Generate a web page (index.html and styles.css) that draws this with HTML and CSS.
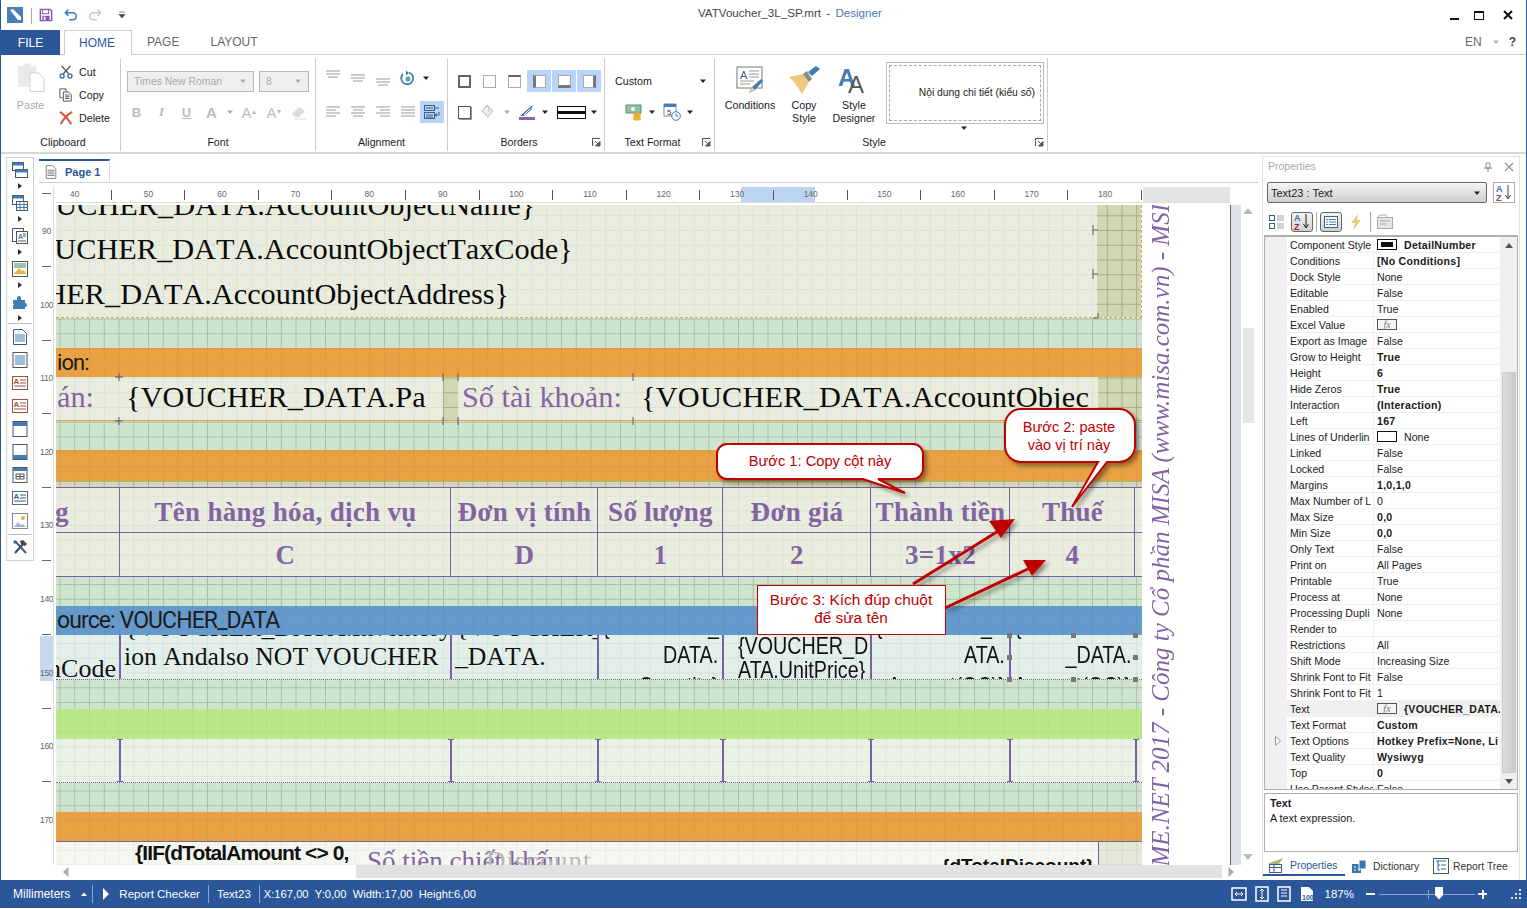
FILE: index.html
```
<!DOCTYPE html>
<html lang="vi">
<head>
<meta charset="utf-8">
<title>VATVoucher_3L_SP.mrt - Designer</title>
<link rel="stylesheet" href="styles.css">
</head>
<body>
<svg class="sprite" width="0" height="0">
  <symbol id="i-cut" viewBox="0 0 16 16"><path d="M3 1l8 9M13 1L5 10" stroke="#555" stroke-width="1.6" fill="none"/><circle cx="3.5" cy="12.5" r="2.3" fill="none" stroke="#3c78b4" stroke-width="1.6"/><circle cx="12.5" cy="12.5" r="2.3" fill="none" stroke="#3c78b4" stroke-width="1.6"/></symbol>
  <symbol id="i-copy" viewBox="0 0 16 16"><path d="M1 1h7v3M1 1v10h3" fill="none" stroke="#444"/><path d="M5 4.500h6l3 3v7.500h-9z" fill="#fff" stroke="#444"/><path d="M7 8h5M7 10h5M7 12h5" stroke="#444"/></symbol>
  <symbol id="i-del" viewBox="0 0 16 16"><path d="M1 1c5 3 9 8 13 14M15 1c-5 3-10 8-13 14" stroke="#d9593c" stroke-width="2.400" fill="none"/></symbol>
  <symbol id="i-az" viewBox="0 0 16 18"><text x="0" y="8" font-size="9" font-weight="700" font-family="Liberation Sans" fill="#3c6eb4">A</text><text x="0" y="17" font-size="9" font-weight="700" font-family="Liberation Sans" fill="#8a3d8a">Z</text><path d="M12 1v13M9.500 11l2.500 4 2.500-4" stroke="#444" fill="none"/></symbol>
  <symbol id="i-text" viewBox="0 0 16 16"><rect x=".5" y="1.500" width="15" height="13" fill="#fff" stroke="#666"/><path d="M8 5h6M8 8h6M2 11h12" stroke="#3a5f8c"/><text x="1.500" y="9" font-size="8" font-weight="700" font-family="Liberation Sans" fill="#3a5f8c">A</text></symbol>
  <symbol id="i-text2" viewBox="0 0 16 16"><rect x=".5" y="1.500" width="15" height="13" fill="#fff" stroke="#a0523d"/><path d="M8 5h6M8 8h6M2 11h12" stroke="#a0523d"/><text x="1.500" y="9" font-size="8" font-weight="700" font-family="Liberation Sans" fill="#a0523d">A</text></symbol>
  <symbol id="i-caretd" viewBox="0 0 8 8"><path d="M1 2.500h6L4 6z" fill="currentColor"/></symbol>
</svg>
<div class="app">
  <header class="titlebar">
    <div class="qat">
      <svg class="logo" viewBox="0 0 16 16"><rect width="16" height="16" fill="#4a7eb8"/><path d="M3 3l3-1 8 8v3h-3z" fill="#fff"/></svg>
      <span class="qat-sep"></span>
      <svg class="qat-i" viewBox="0 0 16 16"><path d="M1.500 1.500h11l2 2v11h-13z" fill="#f6f0fa" stroke="#8b51a8" stroke-width="1.500"/><rect x="4" y="2" width="7" height="4.500" fill="#fff" stroke="#8b51a8"/><rect x="4" y="9" width="8" height="5" fill="#8b51a8"/><rect x="5.500" y="10" width="2" height="4" fill="#fff"/></svg>
      <svg class="qat-i undo" viewBox="0 0 16 16"><path d="M2 5.500h8a4 4 0 010 8H6M5 2L1.500 5.500 5 9" fill="none" stroke="#3f7cb8" stroke-width="1.800"/></svg>
      <svg class="qat-i redo" viewBox="0 0 16 16"><path d="M14 5.500H6a4 4 0 000 8h4M11 2l3.500 3.500L11 9" fill="none" stroke="#c9c9c9" stroke-width="1.800"/></svg>
      <svg class="qat-c" viewBox="0 0 8 8"><path d="M1 1h6M1 3.500h6L4 7z" fill="#444" stroke="#444" stroke-width=".6"/></svg>
    </div>
    <div class="doc-title">VATVoucher_3L_SP.mrt<span class="dash"> - </span><span class="app-name">Designer</span></div>
    <div class="winbtns">
      <span class="win min"></span>
      <span class="win max"></span>
      <svg class="win-x" viewBox="0 0 10 10"><path d="M1 1l8 8M9 1l-8 8" stroke="#111" stroke-width="2"/></svg>
    </div>
  </header>
  <nav class="tabs">
    <span class="tab-file">FILE</span>
    <span class="tab-home">HOME</span>
    <span class="tab-page">PAGE</span>
    <span class="tab-layout">LAYOUT</span>
    <span class="tab-right"><span>EN</span><svg class="car" viewBox="0 0 8 8"><use href="#i-caretd"/></svg><b>?</b></span>
  </nav>
  <section class="ribbon">
    <div class="group g-clip">
      <div class="gbody clip-body">
        <div class="big paste">
          <svg class="paste-i" viewBox="0 0 30 32"><path d="M1 4h6V1h8v3h6v22H1z" fill="#e9e9e9"/><path d="M14 11h9l6 6v14H14z" fill="#fff" stroke="#cfcfcf"/></svg>
          <span>Paste</span>
        </div>
        <div class="clip-list">
          <div class="sm"><svg class="i14" viewBox="0 0 16 16"><use href="#i-cut"/></svg><span>Cut</span></div>
          <div class="sm"><svg class="i14" viewBox="0 0 16 16"><use href="#i-copy"/></svg><span>Copy</span></div>
          <div class="sm"><svg class="i14" viewBox="0 0 16 16"><use href="#i-del"/></svg><span>Delete</span></div>
        </div>
      </div>
      <div class="glabel">Clipboard</div>
    </div>
    <div class="group g-font">
      <div class="gbody rows">
        <div class="rrow">
          <div class="combo c-name"><span>Times New Roman</span><svg class="car" viewBox="0 0 8 8"><use href="#i-caretd"/></svg></div>
          <div class="combo c-size"><span>8</span><svg class="car" viewBox="0 0 8 8"><use href="#i-caretd"/></svg></div>
        </div>
        <div class="rrow dis">
          <span class="cell fb">B</span><span class="cell fi">I</span><span class="cell fu">U</span><span class="cell fb fa">A</span><span class="cell-c"><svg class="car" viewBox="0 0 8 8"><use href="#i-caretd"/></svg></span><span class="cell fg">A<sup>▴</sup></span><span class="cell fg">A<sup>▾</sup></span>
          <span class="cell"><svg class="i16" viewBox="0 0 16 16"><path d="M1 10l7-7 6 4-6 6H4z" fill="#dcdcdc"/><path d="M4 15h11" stroke="#dcdcdc"/></svg></span>
        </div>
      </div>
      <div class="glabel">Font</div>
    </div>
    <div class="group g-align">
      <div class="gbody rows">
        <div class="rrow r-up">
          <span class="cell"><svg class="i16" viewBox="0 0 16 16"><path d="M1 1h14M1 4h14M3 7h10" stroke="#999"/></svg></span>
          <span class="cell"><svg class="i16" viewBox="0 0 16 16"><path d="M1 5h14M1 8h14M3 11h10" stroke="#999"/></svg></span>
          <span class="cell"><svg class="i16" viewBox="0 0 16 16"><path d="M1 9h14M1 12h14M3 15h10" stroke="#999"/></svg></span>
          <span class="cell"><svg class="i16" viewBox="0 0 16 16"><path d="M3 4a6 6 0 106-1.500" fill="none" stroke="#3f7cb8" stroke-width="1.800"/><path d="M6 .5v5l3-2.500z" fill="#3f7cb8"/><circle cx="8" cy="9" r="2.500" fill="#6f9f8f"/></svg></span>
          <span class="cell-c"><svg class="car blk" viewBox="0 0 8 8"><use href="#i-caretd"/></svg></span>
        </div>
        <div class="rrow">
          <span class="cell"><svg class="i16" viewBox="0 0 16 16"><path d="M1 3h14M1 6h10M1 9h14M1 12h10" stroke="#999"/></svg></span>
          <span class="cell"><svg class="i16" viewBox="0 0 16 16"><path d="M1 3h14M3 6h10M1 9h14M3 12h10" stroke="#999"/></svg></span>
          <span class="cell"><svg class="i16" viewBox="0 0 16 16"><path d="M1 3h14M5 6h10M1 9h14M5 12h10" stroke="#999"/></svg></span>
          <span class="cell"><svg class="i16" viewBox="0 0 16 16"><path d="M1 3h14M1 6h14M1 9h14M1 12h14" stroke="#999"/></svg></span>
          <span class="cell on"><svg class="i16" viewBox="0 0 16 16"><rect x=".5" y="1.500" width="10" height="5" fill="none" stroke="#3a5f8c"/><rect x=".5" y="8.500" width="10" height="6" fill="none" stroke="#3a5f8c"/><path d="M2 4h7M2 11h7M2 13h7M11 4h4M15 8v3h-4M13 9.500L11 11l2 1.500" fill="none" stroke="#3a5f8c"/></svg></span>
        </div>
      </div>
      <div class="glabel">Alignment</div>
    </div>
    <div class="group g-bord">
      <div class="gbody rows">
        <div class="rrow">
          <span class="cell"><span class="bx bx-all"></span></span>
          <span class="cell"><span class="bx"></span></span>
          <span class="cell"><span class="bx bx-t"></span></span>
          <span class="cell on"><span class="bx bx-l"></span></span>
          <span class="cell on"><span class="bx bx-b"></span></span>
          <span class="cell on"><span class="bx bx-r"></span></span>
        </div>
        <div class="rrow">
          <span class="cell"><span class="bx bx-sh"></span></span>
          <span class="cell-w"><svg class="i16" viewBox="0 0 16 16"><path d="M7 1l6 6-5 6-6-6z" fill="#eee" stroke="#bbb"/><path d="M5 4a2 2 0 014 0v4" fill="none" stroke="#bbb"/></svg></span>
          <span class="cell-c"><svg class="car" viewBox="0 0 8 8"><use href="#i-caretd"/></svg></span>
          <span class="cell-p"><svg class="i16" viewBox="0 0 16 16"><path d="M1 12l9-8 4-3-2 5-7 6z" fill="#3f7cb8"/><path d="M5 11l6-6" stroke="#fff"/><rect x="0" y="13" width="16" height="3" fill="#8a64a8"/></svg></span>
          <span class="cell-c"><svg class="car blk" viewBox="0 0 8 8"><use href="#i-caretd"/></svg></span>
          <span class="linestyle"></span>
          <span class="cell-c"><svg class="car blk" viewBox="0 0 8 8"><use href="#i-caretd"/></svg></span>
        </div>
      </div>
      <div class="glabel">Borders<svg class="launch" viewBox="0 0 9 9"><path d="M.5 8V.5H8" fill="none" stroke="#555"/><path d="M3 3l4 4M8 3.500V8H3.500z" stroke="#555" fill="#555"/></svg></div>
    </div>
    <div class="group g-tf">
      <div class="gbody rows">
        <div class="rrow tf-top"><span>Custom</span><svg class="car blk" viewBox="0 0 8 8"><use href="#i-caretd"/></svg></div>
        <div class="rrow tf-bot">
          <span class="cell-w"><svg class="i18" viewBox="0 0 18 18"><rect x="1" y="2" width="15" height="8" fill="#8fbf9f" stroke="#5e9474"/><circle cx="8" cy="6" r="2" fill="#fff"/><ellipse cx="12" cy="11" rx="4" ry="1.700" fill="#e8b23c"/><ellipse cx="12" cy="13.500" rx="4" ry="1.700" fill="#e8b23c"/><ellipse cx="12" cy="16" rx="4" ry="1.700" fill="#e8b23c"/></svg></span>
          <span class="cell-c"><svg class="car blk" viewBox="0 0 8 8"><use href="#i-caretd"/></svg></span>
          <span class="cell-w cw2"><svg class="i18" viewBox="0 0 18 18"><rect x="1" y="1" width="12" height="12" fill="#fff" stroke="#888"/><rect x="1" y="1" width="12" height="3" fill="#3f7cb8"/><text x="4" y="12" font-size="8" font-family="Liberation Sans" fill="#444">5</text><circle cx="13" cy="13" r="4.300" fill="#fff" stroke="#3f7cb8"/><path d="M13 10.500V13h2" stroke="#3f7cb8" fill="none"/></svg></span>
          <span class="cell-c"><svg class="car blk" viewBox="0 0 8 8"><use href="#i-caretd"/></svg></span>
        </div>
      </div>
      <div class="glabel">Text Format<svg class="launch" viewBox="0 0 9 9"><path d="M.5 8V.5H8" fill="none" stroke="#555"/><path d="M3 3l4 4M8 3.500V8H3.500z" stroke="#555" fill="#555"/></svg></div>
    </div>
    <div class="group g-style">
      <div class="gbody style-body">
        <div class="big sb-cond">
          <svg class="i28" viewBox="0 0 28 28"><rect x="1" y="1" width="25" height="21" fill="#fff" stroke="#777"/><text x="4" y="13" font-size="11" font-family="Liberation Sans" fill="#3a5f8c">A</text><path d="M13 5h10M13 8h10M13 11h10M4 15h14M4 18h10" stroke="#999"/><path d="M13 27l3-6 9-8 2 2-8 9z" fill="#3f7cb8"/><path d="M13 27l3-6 3 3z" fill="#efc980"/></svg>
          <span>Conditions</span>
        </div>
        <div class="big sb-copy">
          <svg class="i32" viewBox="0 0 32 28"><path d="M1 11l14-3 6 8-7 12C10 22 6 15 1 11z" fill="#efc980"/><path d="M15 8l6 8 3-3-5-8z" fill="#8a8a8a"/><path d="M20 6l8-6 4 3-8 7z" fill="#3f7cb8"/></svg>
          <span>Copy<br>Style</span>
        </div>
        <div class="big sb-des">
          <svg class="i32" viewBox="0 0 32 28"><text x="0" y="20" font-size="24" font-family="Liberation Sans" font-weight="700" fill="#3f7cb8">A</text><text x="10" y="27" font-size="24" font-family="Liberation Sans" fill="#555">A</text></svg>
          <span>Style<br>Designer</span>
        </div>
        <div class="gallery">
          <div class="gal-in">Nội dung chi tiết (kiểu số)</div>
          <svg class="car blk gal-car" viewBox="0 0 8 8"><use href="#i-caretd"/></svg>
        </div>
      </div>
      <div class="glabel">Style<svg class="launch" viewBox="0 0 9 9"><path d="M.5 8V.5H8" fill="none" stroke="#555"/><path d="M3 3l4 4M8 3.500V8H3.500z" stroke="#555" fill="#555"/></svg></div>
    </div>
  </section>

  <main class="main">
    <aside class="toolbox">
      <span class="tb"><svg class="i16" viewBox="0 0 16 16"><rect x=".5" y=".5" width="11" height="8" fill="#fff" stroke="#555"/><rect x=".5" y=".5" width="11" height="3" fill="#3f7cb8"/><rect x="3.500" y="7.500" width="12" height="8" fill="#fff" stroke="#555"/><rect x="3.500" y="7.500" width="12" height="3" fill="#3f7cb8"/></svg></span>
      <span class="tb-c"></span>
      <span class="tb"><svg class="i16" viewBox="0 0 16 16"><rect x=".5" y=".5" width="11" height="9" fill="#fff" stroke="#555"/><rect x=".5" y=".5" width="11" height="3" fill="#3f7cb8"/><rect x="4.500" y="6.500" width="11" height="9" fill="#fff" stroke="#555"/><path d="M4.500 9.500h11M4.500 12.500h11M8 6.500v9M12 6.500v9" stroke="#3f7cb8"/></svg></span>
      <span class="tb-c"></span>
      <span class="tb"><svg class="i16" viewBox="0 0 16 16"><rect x=".5" y=".5" width="11" height="13" fill="#fff" stroke="#555"/><rect x="4.500" y="3.500" width="11" height="12" fill="#fff" stroke="#555"/><text x="6" y="11" font-size="7" font-weight="700" font-family="Liberation Sans" fill="#3f7cb8">A</text><path d="M11 6h3M11 8h3M6 13h8" stroke="#555"/></svg></span>
      <span class="tb-c"></span>
      <span class="tb"><svg class="i16" viewBox="0 0 16 16"><rect x=".5" y=".5" width="15" height="15" fill="#fff" stroke="#555"/><path d="M2 13l5-6 3 3 2-1 2 4z" fill="#e8b23c"/><rect x="2" y="2" width="12" height="5" fill="#9fc3a8"/></svg></span>
      <span class="tb-c"></span>
      <span class="tb"><svg class="i16" viewBox="0 0 16 16"><path d="M1 6h4V4a2 2 0 014 0v2h4v3a2 2 0 010 4v2H1v-3a2 2 0 000-3z" fill="#3f7cb8"/></svg></span>
      <span class="tb-c"></span>
      <span class="tb-sep"></span>
      <span class="tb t2"><svg class="i16" viewBox="0 0 16 16"><path d="M1.500 .5h9l4 4v11h-13z" fill="#fff" stroke="#555"/><path d="M3 6h10M3 8h10M3 10h10M3 12h10" stroke="#3f7cb8"/></svg></span>
      <span class="tb t2"><svg class="i16" viewBox="0 0 16 16"><rect x="1" y=".5" width="14" height="15" fill="#fff" stroke="#555"/><path d="M3 4h10M3 6h10M3 8h10M3 10h10M3 12h10" stroke="#3f7cb8"/></svg></span>
      <span class="tb t2"><svg class="i16" viewBox="0 0 16 16"><use href="#i-text2"/></svg></span>
      <span class="tb t2"><svg class="i16" viewBox="0 0 16 16"><use href="#i-text2"/></svg></span>
      <span class="tb t2"><svg class="i16" viewBox="0 0 16 16"><rect x="1" y=".5" width="14" height="15" fill="#fff" stroke="#555"/><rect x="1" y="1" width="14" height="4" fill="#3f7cb8"/></svg></span>
      <span class="tb t2"><svg class="i16" viewBox="0 0 16 16"><rect x="1" y=".5" width="14" height="15" fill="#fff" stroke="#555"/><rect x="1" y="11" width="14" height="4" fill="#3f7cb8"/></svg></span>
      <span class="tb t2"><svg class="i16" viewBox="0 0 16 16"><rect x="1" y=".5" width="14" height="15" fill="#fff" stroke="#555"/><rect x="1" y="1" width="14" height="3" fill="#3f7cb8"/><path d="M4 7h8v5H4zM4 9.500h8M8 7v5" fill="none" stroke="#555"/></svg></span>
      <span class="tb t2"><svg class="i16" viewBox="0 0 16 16"><use href="#i-text"/></svg></span>
      <span class="tb t2"><svg class="i16" viewBox="0 0 16 16"><rect x=".5" y=".5" width="15" height="15" fill="#fff" stroke="#888"/><path d="M2 14l4-5 3 3 2-1 3 3z" fill="#9fb6cf"/><circle cx="11" cy="5" r="2" fill="#e8b23c"/></svg></span>
      <span class="tb-sep"></span>
      <span class="tb t3"><svg class="i16" viewBox="0 0 16 16"><path d="M3 2l11 12" stroke="#3a5f8c" stroke-width="2" fill="none"/><path d="M1 3l2-2 2 2-2 2z" fill="#3a5f8c"/><path d="M3 14l9-10" stroke="#444" stroke-width="2" fill="none"/><path d="M8 2l3-1 4 4-2 2-2-1-2-1z" fill="#444"/></svg></span>
    </aside>

    <section class="designer">
      <div class="doc-tabs">
        <div class="doc-tab"><svg class="i14" viewBox="0 0 14 16"><path d="M1.500 .5h7l4 4v11h-11z" fill="#fff" stroke="#777"/><path d="M3 6h8M3 8h8M3 10h8M3 12h8" stroke="#777"/></svg><span>Page 1</span></div>
      </div>
      <div class="ruler-top">
        <div class="rt-strip">
          <span class="rt-sel"></span>
          <span class="rt">40</span><span class="rt">50</span><span class="rt">60</span><span class="rt">70</span><span class="rt">80</span><span class="rt">90</span><span class="rt">100</span><span class="rt">110</span><span class="rt">120</span><span class="rt">130</span><span class="rt">140</span><span class="rt">150</span><span class="rt">160</span><span class="rt">170</span><span class="rt">180</span>
        </div>
        <div class="rt-rest"></div>
      </div>
      <div class="work">
        <div class="ruler-left">
          <span class="rl-sel"></span>
          <span class="rl">90</span><span class="rl">100</span><span class="rl">110</span><span class="rl">120</span><span class="rl">130</span><span class="rl">140</span><span class="rl">150</span><span class="rl">160</span><span class="rl">170</span>
        </div>
        <div class="col-canvas">
          <div class="canvas">
            <div class="page">
              <div class="band h113 split"><div class="bg beige"></div><div class="bg olive w44"></div></div>
              <div class="band h30 green"></div>
              <div class="band h29 orange"></div>
              <div class="band h44 split line-o"><div class="bg beige w387"></div><div class="bg olive w15"></div><div class="bg beige"></div><div class="bg olive w44"></div></div>
              <div class="band h29 green"></div>
              <div class="band h31 orange"></div>
              <div class="band h6 olive"></div>
              <div class="band h90 beige thead">
                <div class="tr">
                  <div class="th first">g</div><div class="th">Tên hàng hóa, dịch vụ</div><div class="th">Đơn vị tính</div><div class="th">Số lượng</div><div class="th">Đơn giá</div><div class="th">Thành tiền</div><div class="th">Thuế</div>
                </div>
                <div class="tr">
                  <div class="th first"></div><div class="th">C</div><div class="th">D</div><div class="th">1</div><div class="th">2</div><div class="th">3=1x2</div><div class="th">4</div>
                </div>
              </div>
              <div class="band h29 green"></div>
              <div class="band h29 blue"><span class="bandtitle">ource: VOUCHER_DATA</span></div>
              <div class="band h45 cyan tdata">
                <div class="td first"><span class="code">nCode</span></div>
                <div class="td serif"><span class="l-top">{VOUCHER_DATA.InventoryItemName</span><span class="l-mid">ion Andalso NOT VOUCHER</span><span class="l-bot">_DATA.TaxText.Contains("KCT")</span></div>
                <div class="td serif"><span class="l-top">{VOUCHER_DATA</span><span class="l-mid">_DATA.</span><span class="l-bot">UnitName}</span></div>
                <div class="td sans"><span class="l-top">{VOUCHER_</span><span class="l-mid right">DATA.</span><span class="l-bot right">Quantity}</span></div>
                <div class="td sans up"><span class="l-a">{VOUCHER_D</span><span class="l-a">ATA.UnitPrice}</span></div>
                <div class="td sans"><span class="l-top">{VOUCHER_D</span><span class="l-mid right">ATA.</span><span class="l-bot right">Amount(OC)}</span></div>
                <div class="td sans"><span class="l-top">{VOUCHER</span><span class="l-mid right">_DATA.</span><span class="l-bot right">Amount(OC)}</span></div>
              </div>
              <div class="band h29 green"></div>
              <div class="band h30 lime"></div>
              <div class="band h44 pale tfoot">
                <span class="tick"></span><span class="tick"></span><span class="tick"></span><span class="tick"></span><span class="tick"></span><span class="tick"></span><span class="tick"></span><span class="tick"></span>
              </div>
              <div class="band h29 green"></div>
              <div class="band h29 orange"></div>
              <div class="band h24 split bottom"><div class="bg white"></div><div class="bg olive2 w44"></div></div>
            </div>

            <div class="t30 r1">{VOUCHER_DATA.AccountObjectName}</div>
            <div class="t30 r2">{VOUCHER_DATA.AccountObjectTaxCode}</div>
            <div class="t30 r3">{VOUCHER_DATA.AccountObjectAddress}</div>
            <div class="bandtitle iontext">ion:</div>
            <div class="t30 purple an">án:</div>
            <div class="t30 vpa">{VOUCHER_DATA.Pa</div>
            <div class="t30 purple stk">Số tài khoản:</div>
            <div class="t30 vob">{VOUCHER_DATA.AccountObjec</div>
            <div class="iif">{IIF(dTotalAmount &lt;&gt; 0,</div>
            <div class="ghost">Số tiền chiết khấu</div>
            <div class="ghost2">Discount</div>
            <div class="tdisc">{dTotalDiscount}</div>
            <div class="side">ME.NET 2017 - Công ty Cổ phần MISA (www.misa.com.vn) - MSI</div>

            <svg class="overlay" viewBox="56 205 1174 660">
              <defs>
                <filter id="sh" x="-20%" y="-20%" width="150%" height="150%"><feDropShadow dx="3" dy="3" stdDeviation="2" flood-color="#000" flood-opacity=".4"/></filter>
              </defs>
              <path d="M1093 225v10M1093 230h5M1093 269v10M1093 274h5M1093 318h5v-5M119 373v8M115 377h8M119 417v8M115 421h8M443 373v8M458 373v8M458 417v8M443 417v8M633 373v8M633 417v8" stroke="#5a5a5a" fill="none"/>
              <g fill="#777"><rect x="1007" y="633" width="5" height="5"/><rect x="1071" y="633" width="5" height="5"/><rect x="1133" y="633" width="5" height="5"/><rect x="1133" y="655" width="5" height="5"/><rect x="1007" y="655" width="5" height="5"/><rect x="1007" y="677" width="5" height="5"/><rect x="1071" y="677" width="5" height="5"/><rect x="1133" y="677" width="5" height="5"/></g>
              <path d="M727 444H913a10 10 0 0110 10v15a10 10 0 01-10 10H878L905 493 863 479H727a10 10 0 01-10-10V454a10 10 0 0110-10z" fill="#fff" stroke="#c00000" stroke-width="2" filter="url(#sh)"/>
              <path d="M1021 409H1119a16 16 0 0116 16v21a16 16 0 01-16 16H1107L1072 507 1098 462H1021a16 16 0 01-16-16V425a16 16 0 0116-16z" fill="#fff" stroke="#c00000" stroke-width="2" filter="url(#sh)"/>
              <g filter="url(#sh)">
                <path d="M913 584L1000 530" stroke="#c00000" stroke-width="3"/><path d="M1015 519L1001 538 989 521z" fill="#c00000"/>
                <path d="M945 608L1030 568" stroke="#c00000" stroke-width="3"/><path d="M1046 560L1032 576 1023 560z" fill="#c00000"/>
              </g>
              <rect x="757.500" y="585.500" width="188" height="49" fill="#fff" stroke="#c00000"/>
            </svg>
            <div class="note n1">Bước 1: Copy cột này</div>
            <div class="note n2">Bước 2: paste<br>vào vị trí này</div>
            <div class="note n3">Bước 3: Kích đúp chuột<br>để sửa tên</div>
          </div>
          <div class="hscroll">
            <svg class="arr" viewBox="0 0 6 10"><path d="M5.500 0v10L0 5z" fill="#aaa"/></svg>
            <span class="h-thumb"></span>
            <svg class="arr" viewBox="0 0 6 10"><path d="M.5 0v10L6 5z" fill="#aaa"/></svg>
          </div>
        </div>
        <div class="strip"></div>
        <div class="vscroll">
          <svg class="arr2" viewBox="0 0 10 6"><path d="M0 6h10L5 0z" fill="#bbb"/></svg>
          <span class="v-thumb"></span>
          <svg class="arr2" viewBox="0 0 10 6"><path d="M0 0h10L5 6z" fill="#bbb"/></svg>
        </div>
      </div>
    </section>

    <aside class="props">
      <div class="p-head"><span>Properties</span><span class="p-ctl"><svg class="i10" viewBox="0 0 10 10"><path d="M3 1h4v5H3zM1 6h8M5 6v4" fill="none" stroke="#888"/></svg><svg class="i10" viewBox="0 0 10 10"><path d="M1 1l8 8M9 1l-8 8" stroke="#999" stroke-width="1.400"/></svg></span></div>
      <div class="p-sel">
        <div class="p-combo"><span>Text23 : Text</span><svg class="car blk" viewBox="0 0 8 8"><use href="#i-caretd"/></svg></div>
        <span class="p-az"><svg class="i18" viewBox="0 0 16 18"><use href="#i-az"/></svg></span>
      </div>
      <div class="p-tools">
        <span class="pt"><svg class="i16" viewBox="0 0 16 16"><rect x=".5" y="1.500" width="5" height="5" fill="#fff" stroke="#3a5f8c"/><rect x=".5" y="9.500" width="5" height="5" fill="#fff" stroke="#3a5f8c"/><path d="M8 2h7M8 4h7M8 6h7M8 10h7M8 12h7M8 14h7" stroke="#9aa" /></svg></span>
        <span class="pt act"><svg class="i18" viewBox="0 0 16 18"><text x="0" y="8" font-size="9" font-weight="700" font-family="Liberation Sans" fill="#3c6eb4">A</text><text x="0" y="17" font-size="9" font-weight="700" font-family="Liberation Sans" fill="#9c2a2a">Z</text><path d="M12 1v13M9.500 11l2.500 4 2.500-4" stroke="#222" fill="none"/></svg></span>
        <span class="pt-sep"></span>
        <span class="pt act"><svg class="i16" viewBox="0 0 16 16"><rect x="1.500" y="2.500" width="13" height="11" fill="#fff" stroke="#3a5f8c"/><path d="M6 5.500h7M6 8h7M6 10.500h7" stroke="#3f7cb8"/><path d="M3 5.500h2M3 8h2M3 10.500h2" stroke="#3f7cb8"/></svg></span>
        <span class="pt"><svg class="i16" viewBox="0 0 16 16"><path d="M10 0L3 9h4l-2 7 8-10H9z" fill="#f3c969"/></svg></span>
        <span class="pt-sep"></span>
        <span class="pt"><svg class="i16" viewBox="0 0 16 16"><rect x=".5" y="3.500" width="15" height="11" fill="#e6e6e6" stroke="#aaa"/><path d="M1 3l2-2h6l1 2M3 7h10M3 10h6" stroke="#aaa" fill="none"/></svg></span>
      </div>
      <div class="p-grid">
        <div class="p-list">
          <div class="row"><span class="k">Component Style</span><span class="v b"><i class="sw dark"></i>DetailNumber</span></div>
          <div class="row"><span class="k">Conditions</span><span class="v b">[No Conditions]</span></div>
          <div class="row"><span class="k">Dock Style</span><span class="v">None</span></div>
          <div class="row"><span class="k">Editable</span><span class="v">False</span></div>
          <div class="row"><span class="k">Enabled</span><span class="v">True</span></div>
          <div class="row"><span class="k">Excel Value</span><span class="v"><i class="fx">fx</i></span></div>
          <div class="row"><span class="k">Export as Image</span><span class="v">False</span></div>
          <div class="row"><span class="k">Grow to Height</span><span class="v b">True</span></div>
          <div class="row"><span class="k">Height</span><span class="v b">6</span></div>
          <div class="row"><span class="k">Hide Zeros</span><span class="v b">True</span></div>
          <div class="row"><span class="k">Interaction</span><span class="v b">(Interaction)</span></div>
          <div class="row"><span class="k">Left</span><span class="v b">167</span></div>
          <div class="row"><span class="k">Lines of Underlin</span><span class="v"><i class="sw"></i>None</span></div>
          <div class="row"><span class="k">Linked</span><span class="v">False</span></div>
          <div class="row"><span class="k">Locked</span><span class="v">False</span></div>
          <div class="row"><span class="k">Margins</span><span class="v b">1,0,1,0</span></div>
          <div class="row"><span class="k">Max Number of L</span><span class="v">0</span></div>
          <div class="row"><span class="k">Max Size</span><span class="v b">0,0</span></div>
          <div class="row"><span class="k">Min Size</span><span class="v b">0,0</span></div>
          <div class="row"><span class="k">Only Text</span><span class="v">False</span></div>
          <div class="row"><span class="k">Print on</span><span class="v">All Pages</span></div>
          <div class="row"><span class="k">Printable</span><span class="v">True</span></div>
          <div class="row"><span class="k">Process at</span><span class="v">None</span></div>
          <div class="row"><span class="k">Processing Dupli</span><span class="v">None</span></div>
          <div class="row"><span class="k">Render to</span><span class="v"></span></div>
          <div class="row"><span class="k">Restrictions</span><span class="v">All</span></div>
          <div class="row"><span class="k">Shift Mode</span><span class="v">Increasing Size</span></div>
          <div class="row"><span class="k">Shrink Font to Fit</span><span class="v">False</span></div>
          <div class="row"><span class="k">Shrink Font to Fit</span><span class="v">1</span></div>
          <div class="row sel"><span class="k">Text</span><span class="v b"><i class="fx">fx</i>{VOUCHER_DATA.A</span></div>
          <div class="row"><span class="k">Text Format</span><span class="v b">Custom</span></div>
          <div class="row"><svg class="expander" viewBox="0 0 6 10"><path d="M.5.500v9L5.500 5z" fill="#fff" stroke="#999"/></svg><span class="k">Text Options</span><span class="v b">Hotkey Prefix=None, Li</span></div>
          <div class="row"><span class="k">Text Quality</span><span class="v b">Wysiwyg</span></div>
          <div class="row"><span class="k">Top</span><span class="v b">0</span></div>
          <div class="row"><span class="k">Use Parent Styles</span><span class="v">False</span></div>
        </div>
        <div class="p-scroll">
          <svg class="arr2" viewBox="0 0 10 6"><path d="M1 6h8L5 1z" fill="#555"/></svg>
          <span class="p-thumb"></span>
          <svg class="arr2" viewBox="0 0 10 6"><path d="M1 1h8L5 6z" fill="#555"/></svg>
        </div>
      </div>
      <div class="p-desc"><b>Text</b><span>A text expression.</span></div>
      <div class="p-tabs">
        <span class="pb on"><svg class="i16" viewBox="0 0 16 16"><path d="M1 6l9-3 5-2-4 6H1z" fill="#a8b86c"/><rect x="1.500" y="7.500" width="12" height="8" fill="#fff" stroke="#3a5f8c"/><path d="M1.500 10.500h12M6 7.500v8" stroke="#3a5f8c"/></svg>Properties</span>
        <span class="pb"><svg class="i16" viewBox="0 0 16 16"><rect x="1" y="6" width="9" height="9" fill="#3a74b0"/><rect x="8" y="2" width="7" height="9" fill="#3a74b0" stroke="#fff"/><path d="M3 9h2M3 12h2M7 12h2" stroke="#fff"/></svg>Dictionary</span>
        <span class="pb pb-last"><svg class="i16" viewBox="0 0 16 16"><rect x=".5" y=".5" width="15" height="15" fill="#fff" stroke="#555"/><path d="M3 3h10M5 3v9h2M5 7h2" stroke="#2a6fae" fill="none"/><path d="M8 7h5M8 11h5" stroke="#2a6fae"/></svg>Report Tree</span>
      </div>
    </aside>
  </main>

  <footer class="status">
    <span class="st st1">Millimeters</span>
    <svg class="st-car" viewBox="0 0 8 8"><path d="M1 6h6L4 2.500z" fill="#fff"/></svg>
    <span class="st-sep"></span>
    <svg class="st-play" viewBox="0 0 8 12"><path d="M1 0v12l6-6z" fill="#fff"/></svg>
    <span class="st">Report Checker</span>
    <span class="st-sep"></span>
    <span class="st">Text23</span>
    <span class="st-sep"></span>
    <span class="st st-xy">X:167,00 &nbsp;Y:0,00 &nbsp;Width:17,00 &nbsp;Height:6,00</span>
    <div class="st-right">
      <svg class="st-i" viewBox="0 0 16 16"><rect x="1" y="2" width="14" height="12" fill="none" stroke="#fff" stroke-width="1.500"/><path d="M4 8h8M4 8l2-2M4 8l2 2M12 8l-2-2M12 8l-2 2" stroke="#fff"/></svg>
      <svg class="st-i" viewBox="0 0 16 16"><rect x="2" y="1" width="12" height="14" fill="none" stroke="#fff" stroke-width="1.500"/><path d="M8 3v10M8 3L6 5M8 3l2 2M8 13l-2-2M8 13l2-2" stroke="#fff"/></svg>
      <svg class="st-i" viewBox="0 0 16 16"><rect x="2" y="1" width="12" height="14" fill="none" stroke="#fff" stroke-width="1.500"/><path d="M5 4h6M5 7h6M5 10h6" stroke="#fff"/></svg>
      <svg class="st-i" viewBox="0 0 16 16"><path d="M2 1h8l4 4v10H2z" fill="#fff"/><text x="3" y="14" font-size="7" font-weight="700" font-family="Liberation Sans" fill="#2b579a">100</text></svg>
      <span class="st st-zoom">187%</span>
      <span class="zm-minus"></span>
      <span class="slider"><span class="s-tick"></span><span class="s-thumb"></span></span>
      <span class="zm-plus"></span>
      <svg class="grip" viewBox="0 0 12 12"><g fill="#dde"><rect x="9" y="1" width="2" height="2"/><rect x="5" y="5" width="2" height="2"/><rect x="9" y="5" width="2" height="2"/><rect x="1" y="9" width="2" height="2"/><rect x="5" y="9" width="2" height="2"/><rect x="9" y="9" width="2" height="2"/></g></svg>
    </div>
  </footer>
</div>
</body>
</html>
```
FILE: styles.css
```
* { box-sizing: border-box; }
html, body { margin: 0; height: 909px; overflow: hidden; background: #fff; }
body { font-family: "Liberation Sans", Arial, sans-serif; font-size: 10.7px; color: #222; }
svg { display: block; flex: none; }
.sprite { position: absolute; }
.app { width: 1527px; height: 908px; border-left: 1px solid #2b579a; border-right: 1px solid #2b579a; display: flex; flex-direction: column; }

.titlebar { height: 30px; display: flex; align-items: center; }
.qat { width: 697px; display: flex; align-items: center; padding-left: 6px; }
.logo { width: 16px; height: 16px; }
.qat-sep { width: 1px; height: 16px; background: #aaa; margin: 2px 7px 0 8px; }
.qat-i { width: 14px; height: 14px; margin-right: 11px; }
.undo { margin-right: 10px; }
.redo { margin-right: 16px; }
.qat-c { width: 8px; height: 8px; }
.doc-title { font-size: 11.6px; color: #444; margin-top: -5px; }
.dash { margin: 0 2px; white-space: pre; }
.app-name { color: #4a78b4; }
.winbtns { margin-left: auto; display: flex; align-items: center; margin-top: 0; }
.win { display: block; }
.min { width: 9px; height: 2px; background: #111; margin: 8px 15px 0 0; }
.max { width: 10px; height: 9px; border: 1px solid #111; border-top-width: 2px; margin-right: 19px; }
.win-x { width: 10px; height: 10px; margin-right: 13px; }

.tabs { height: 25px; display: flex; align-items: stretch; border-bottom: 1px solid #ccc; font-size: 12px; color: #666; position: relative; }
.tabs > span { display: flex; align-items: center; }
.tab-file { width: 59px; background: #2b579a; color: #fff; justify-content: center; margin-bottom: -1px; }
.tab-home { width: 68px; margin-left: 4px; padding-right: 2px; justify-content: center; color: #2b579a; background: #fff; border: 1px solid #ccc; border-bottom: 0; margin-bottom: -1px; }
.tab-page { margin-left: 15px; }
.tab-layout { margin-left: 31px; }
.tab-right { margin-left: auto; font-size: 12px; padding-right: 10px; }
.tab-right span { margin-right: 10px; }
.tab-right b { font-weight: 700; color: #444; margin-left: 9px; }
.car { width: 8px; height: 8px; color: #aaa; }
.car.blk { color: #222; }

.ribbon { height: 99px; display: flex; padding-top: 3px; padding-left: 1px; border-bottom: 2px solid #d8d8d8; }
.group { height: 93px; display: flex; flex-direction: column; border-right: 1px solid #ccc; flex: none; }
.gbody { flex: 1; padding-top: 2px; }
.glabel { height: 18px; text-align: center; font-size: 10.6px; color: #222; position: relative; line-height: 19px; }
.launch { position: absolute; right: 3px; top: 5px; width: 9px; height: 9px; }
.g-clip { width: 119px; }
.g-clip .glabel { padding-left: 4px; }
.g-font { width: 195px; }
.g-align { width: 132px; }
.g-bord { width: 157px; }
.g-bord .glabel { padding-right: 14px; }
.g-tf { width: 110px; }
.g-tf .glabel { padding-right: 14px; }
.g-style { width: 333px; }
.g-style .glabel { padding-right: 14px; }
.clip-body { display: flex; }
.big { display: flex; flex-direction: column; align-items: center; text-align: center; line-height: 13px; font-size: 10.7px; color: #222; }
.paste { width: 57px; padding-top: 2px; color: #aaa; gap: 6px; }
.paste-i { width: 28px; height: 31px; }
.clip-list { display: flex; flex-direction: column; }
.sm { height: 23px; display: flex; align-items: center; gap: 6px; }
.i14 { width: 14px; height: 14px; }
.i16 { width: 16px; height: 16px; }
.i18 { width: 18px; height: 18px; }
.i10 { width: 10px; height: 10px; }
.i28 { width: 28px; height: 28px; }
.i32 { width: 32px; height: 28px; }

.rows { display: flex; flex-direction: column; padding-top: 11px; gap: 7px; }
.rrow { height: 24px; display: flex; align-items: center; }
.combo { height: 21px; border: 1px solid #b8b8b8; background: #efefef; color: #aaa; font-size: 10.4px; display: flex; align-items: center; justify-content: space-between; padding: 0 6px; }
.c-name { width: 127px; margin-left: 6px; }
.c-size { width: 50px; margin-left: 5px; }
.cell { width: 25px; height: 22px; display: flex; align-items: center; justify-content: center; flex: none; }
.cell-c { width: 12px; display: flex; justify-content: center; flex: none; }
.cell-w { width: 17px; display: flex; justify-content: center; flex: none; }
.cell-p { width: 24px; display: flex; justify-content: center; flex: none; }
.cell.on { background: #b8d4f8; border-right: 1px solid #fff; }
.dis { padding-left: 3px; color: #bbb; font-size: 13px; }
.fb { font-weight: 700; }
.fi { font-style: italic; font-family: "Liberation Serif", serif; font-weight: 700; }
.fu { text-decoration: underline; font-weight: 700; }
.fa { font-size: 15px; }
.fg { font-size: 15px; }
.fg sup { font-size: 8px; line-height: 0; }
.g-align .rrow { padding-left: 4px; }
.r-up { margin-top: -3px; margin-bottom: 3px; }
.g-bord .rrow { padding-left: 4px; }
.g-bord .cell-w { width: 22px; }
.g-bord .cell-w + .cell-c { width: 16px; }
.bx { width: 13px; height: 13px; border: 1px solid #aaa; display: block; background: #fff; }
.bx-all { border: 2px solid #666; }
.bx-t { border-top: 2px solid #666; }
.bx-l { border-left: 3px solid #777; }
.bx-b { border-bottom: 3px solid #777; }
.bx-r { border-right: 3px solid #777; }
.bx-sh { border: 1px solid #555; box-shadow: 1px 1px 0 #999; }
.linestyle { width: 29px; height: 13px; border: 1px solid #111; margin: 0 2px 0 6px; position: relative; background: linear-gradient(#fff 4px, #111 4px, #111 7px, #fff 7px); flex: none; }
.tf-top { padding: 0 7px 0 10px; justify-content: space-between; }
.tf-bot { padding-left: 20px; }
.tf-bot .cell-c { width: 19px; }
.cw2 { margin-left: 2px; }
.style-body { display: flex; align-items: flex-start; padding-top: 8px; position: relative; }
.style-body .big { gap: 5px; }
.sb-cond { width: 70px; }
.sb-copy { width: 38px; }
.sb-des { width: 62px; }
.gallery { width: 158px; height: 62px; margin-left: 1px; margin-top: -4px; border: 1px solid #bbb; padding: 2px; position: relative; }
.gal-in { height: 56px; border: 1px dashed #aaa; display: flex; align-items: center; justify-content: flex-end; padding: 0 5px 2px 0; font-size: 10.300px; }
.gal-car { position: absolute; left: 73px; bottom: -9px; }

.main { height: 726px; display: flex; }
.toolbox { width: 28px; height: 404px; margin: 3px 0 0 5px; border: 1px solid #d0d0d0; display: flex; flex-direction: column; align-items: center; padding-top: 3px; flex: none; }
.tb { height: 18px; display: flex; align-items: center; justify-content: center; flex: none; }
.tb-c { height: 15px; width: 10px; position: relative; flex: none; }
.tb-c::after { content: ""; position: absolute; left: 3px; top: 4px; border-left: 4px solid #333; border-top: 3.500px solid transparent; border-bottom: 3.500px solid transparent; }
.tb-sep { width: 24px; height: 1px; background: #bbb; flex: none; }
.tb-c + .tb-sep { margin: -3px 0 1px; }
.t2 + .tb-sep { margin: 2px 0 1px; }
.t2 { height: 23px; }
.t3 { height: 22px; }

.designer { width: 1219px; margin-left: 5px; display: flex; flex-direction: column; flex: none; }
.doc-tabs { height: 24px; margin-top: 5px; border-bottom: 1px solid #d0d0d0; flex: none; display: flex; }
.doc-tab { width: 71px; height: 24px; border-top: 2px solid #2b579a; border-right: 1px solid #ddd; display: flex; align-items: center; gap: 7px; padding-left: 5px; color: #2b579a; font-weight: 700; font-size: 11px; }
.ruler-top { height: 16px; margin-top: 4px; margin-left: 17px; margin-right: 28px; display: flex; flex: none; border-bottom: 1px solid #ddd; overflow: hidden; position: relative; }
.rt-strip { width: 1087px; display: flex; overflow: hidden; position: relative; flex: none; }
.rt { flex: none; width: 73.6px; position: relative; text-align: center; font-size: 8.500px; color: #666; line-height: 15px; }
.rt-sel + .rt { margin-left: -18px; }
.rt::after { content: ""; position: absolute; right: 0; top: 3px; width: 1px; height: 10px; background: #555; }
.rt-sel { position: absolute; left: 685px; top: 0; bottom: 0; width: 74px; background: #bcd3f2; }
.rt-rest { flex: 1; background: #e4e4e4; }
.work { flex: 1; display: flex; min-height: 0; }
.ruler-left { width: 14px; margin-left: 1px; margin-right: 2px; height: 678px; margin-top: -16px; border-right: 1px solid #ddd; padding-top: 6px; position: relative; flex: none; overflow: hidden; }
.rl { display: block; height: 73.6px; font-size: 8.500px; color: #666; position: relative; text-align: center; line-height: 76px; letter-spacing: -.3px; }
.rl::before { content: ""; position: absolute; left: 2px; top: -.5px; width: 9px; height: 1px; background: #666; }
.rl-sel { position: absolute; left: 0; right: 0; top: 449px; height: 45px; background: #c7d9f1; }
.col-canvas { width: 1174px; flex: none; margin-top: 2px; display: flex; flex-direction: column; }
.canvas { height: 660px; position: relative; overflow: hidden; background: #fff; flex: none; border-right: 1px solid #666; width: 1175px; }
.strip { width: 10px; background: #dde1e9; margin-top: 2px; height: 660px; flex: none; margin-left: 1px; }
.vscroll { width: 14px; margin-top: 2px; height: 660px; display: flex; flex-direction: column; align-items: center; justify-content: flex-start; position: relative; flex: none; padding: 3px 0 5px; }
.arr2 { width: 10px; height: 6px; flex: none; }
.v-thumb { width: 11px; height: 95px; background: #e6e6e6; margin-top: 114px; margin-bottom: auto; }
.hscroll { height: 13px; display: flex; align-items: center; padding: 0 0 0 7px; margin-right: -4px; }
.arr { width: 6px; height: 10px; }
.h-thumb { height: 13px; width: 866px; background: #e2e2e2; margin: 0 6px 0 auto; }

.page { width: 1086px; }
.band { width: 100%; --c: #fff; --l: #fff; background-color: var(--c); background-image: linear-gradient(to right, var(--l) 1px, transparent 1px), linear-gradient(to bottom, var(--l) 1px, transparent 1px); background-size: 14.75px 14.75px; background-position: .5px 8.8px; background-attachment: fixed; position: relative; }
.bg { height: 100%; flex: 1; --c: #fff; --l: #fff; background-color: var(--c); background-image: linear-gradient(to right, var(--l) 1px, transparent 1px), linear-gradient(to bottom, var(--l) 1px, transparent 1px); background-size: 14.75px 14.75px; background-position: .5px 8.8px; background-attachment: fixed; }
.split { display: flex; }
.beige { --c: #e9eddf; --l: #dde2d0; }
.olive { --c: #d1d6b3; --l: #a4aa8b; }
.olive2 { --c: #e4e8d6; --l: #d6dbc6; }
.green { --c: #cfe4cd; --l: #a8bfa5; }
.orange { --c: #e8a143; --l: #e09a40; }
.blue { --c: #6699cc; --l: #6094c8; }
.cyan { --c: #e3efe9; --l: #d6e3dd; }
.lime { --c: #b9e88a; --l: #b2e180; }
.pale { --c: #e9f2e5; --l: #dce6d8; }
.white { --c: #f4f8f0; --l: #e9eee5; }
.h6 { height: 6px; } .h24 { height: 24px; } .h29 { height: 29px; } .h30 { height: 30px; } .h31 { height: 31px; } .h44 { height: 44px; } .h45 { height: 45px; } .h90 { height: 90px; } .h113 { height: 113px; border-bottom: 1px dashed #e8a143; }
.w44 { flex: 0 0 44px; } .w387 { flex: 0 0 387px; } .w15 { flex: 0 0 15px; }
.line-o { border-bottom: 1px solid #e8a143; }
.h113 { border-right: 1px dashed #e8a143; }

.thead { display: flex; flex-direction: column; }
.tr { display: grid; grid-template-columns: 63px 331px 147px 125px 148px 139px 126px; height: 45px; border-top: 1px solid #7a60a6; }
.tr:last-child { border-bottom: 1px solid #7a60a6; }
.th { border-left: 1px solid #7a60a6; font: 700 27px/45px "Liberation Serif", serif; color: #8264a4; text-align: center; letter-spacing: .3px; padding-left: 1px; white-space: nowrap; font-kerning: none; }
.tr:first-child .th { line-height: 49px; }
.th.first { border-left: 0; text-align: left; margin-left: -1px; padding-left: 0; }
.th:last-child { border-right: 1px solid #7a60a6; }

.bandtitle { font: 23px/29px Roboto, sans-serif; color: #1c1c1c; letter-spacing: -.9px; padding-left: 1px; white-space: nowrap; display: block; }
.iontext { position: absolute; left: 0; top: 143px; font-size: 22px; }

.tdata { display: grid; grid-template-columns: 63px 331px 147px 125px 148px 139px 126px; overflow: hidden; border-bottom: 1px dotted #7a60a6; }
.td { border-left: 2px solid #7a60a6; position: relative; overflow: hidden; color: #111; white-space: nowrap; }
.td.first { border-left: 0; }
.td span { position: absolute; display: block; }
.serif { font: 25.7px/30px "Liberation Serif", serif; font-kerning: none; }
.sans { font: 24px/26px "Liberation Sans", sans-serif; }
.code { font: 26px/30px "Liberation Serif", serif; right: 3px; top: 19px; }
.l-top { left: 4px; top: -22px; }
.l-mid { left: 3px; top: 7px; }
.l-bot { left: 4px; top: 38px; }
.sans .l-top, .sans .l-a { transform: scaleX(.82); transform-origin: 0 0; }
.sans .l-mid, .sans .l-bot { transform: scaleX(.82); transform-origin: 100% 0; }
.td .right { left: auto; right: 4px; }
.up .l-a:first-child { left: 14px; top: -2px; }
.up .l-a:last-child { left: 14px; top: 22px; }
.tfoot { display: grid; grid-template-columns: 63px 331px 147px 125px 148px 139px 126px 7px; border-bottom: 1px dotted #7a60a6; }
.tick { position: relative; }
.tick:first-child { visibility: hidden; }
.tick::before { content: ""; width: 2px; background: #7a60a6; position: absolute; left: 0; top: 0; bottom: 0; }
.tick::after { content: ""; width: 6px; top: 0; bottom: 0; position: absolute; left: -2px; border-top: 1px solid #7a60a6; border-bottom: 1px solid #7a60a6; }
.bottom { border-top: 1px solid #7a60a6; }
.bottom .w44 { border-left: 1px solid #7a60a6; }

.t30 { position: absolute; font: 30.3px/34px "Liberation Serif", serif; color: #0a0a0a; white-space: nowrap; font-kerning: none; }
.purple { color: #8264a4; }
.r1 { left: -59px; top: -17px; }
.r2 { left: -60px; top: 27px; }
.r3 { left: -112px; top: 72px; }
.an { left: 1px; top: 175px; }
.vpa { left: 70px; top: 175px; letter-spacing: .1px; }
.stk { left: 406px; top: 175px; }
.vob { left: 585px; top: 175px; letter-spacing: .2px; }
.iif { position: absolute; left: 79px; top: 636px; font: 700 21px/24px "Liberation Sans", sans-serif; letter-spacing: -.9px; white-space: nowrap; color: #111; }
.ghost { position: absolute; left: 311px; top: 641px; font: 27px/30px "Liberation Serif", serif; color: #8264a4; white-space: nowrap; }
.ghost2 { position: absolute; left: 430px; top: 641px; font: 27px/30px "Liberation Serif", serif; color: #b9b9b9; white-space: nowrap; letter-spacing: 1px; }
.tdisc { position: absolute; left: 886px; top: 650px; font: 700 19px/22px "Liberation Sans", sans-serif; white-space: nowrap; color: #111; }
.side { position: absolute; left: 1090px; bottom: -1px; writing-mode: vertical-rl; transform: rotate(180deg); font: italic 25px/30px "Liberation Serif", serif; color: #8264a4; white-space: nowrap; }

.overlay { position: absolute; left: 0; top: 0; width: 1174px; height: 660px; pointer-events: none; }
.note { position: absolute; line-height: 18px; color: #c00000; text-align: center; white-space: nowrap; transform: translateX(-50%); }
.n1 { left: 764px; top: 247px; font-size: 14.7px; }
.n2 { left: 1013px; top: 213px; font-size: 14.6px; }
.n3 { left: 795px; top: 386px; font-size: 15.4px; }

.props { width: 258px; margin-left: 4px; margin-top: 2px; border: 1px solid #e2e2e2; border-width: 1px 1px 0 1px; display: flex; flex-direction: column; flex: none; }
.p-head { height: 25px; display: flex; align-items: flex-start; justify-content: space-between; color: #aaa; padding: 3px 5px 0; font-size: 10.500px; }
.p-ctl { display: flex; gap: 11px; padding-top: 2px; }
.p-sel { height: 22px; display: flex; padding-left: 4px; }
.p-combo { width: 220px; height: 21px; border: 1px solid #666; border-radius: 2px; background: linear-gradient(#f4f4f4, #cfcfcf); display: flex; align-items: center; justify-content: space-between; padding: 0 5px 0 3px; font-size: 11px; color: #222; }
.p-az { width: 22px; height: 21px; margin-left: 6px; border: 1px solid #aaa; display: flex; align-items: center; justify-content: center; }
.p-tools { height: 31px; display: flex; align-items: flex-end; padding: 0 0 3px 2px; gap: 1px; }
.pt { width: 24px; height: 20px; display: flex; align-items: center; justify-content: center; }
.pt.act { border: 1px solid #666; border-radius: 3px; background: linear-gradient(#f4f4f4, #d0d0d0); width: 22px; margin: 0 1px; }
.pt-sep { width: 1px; height: 20px; background: #aaa; margin: 0 1px; }
.p-grid { height: 555px; margin: 0 1px; border: 1px solid #b0b0b0; border-width: 2px 1px 1px 1px; display: flex; overflow: hidden; background: #f0f0f0; flex: none; }
.p-list { width: 235px; padding-left: 22px; flex: none; background: #f0f0f0; }
.row { height: 16px; background: #fff; border-bottom: 1px solid #f0f0f0; display: flex; align-items: center; font-size: 10.600px; color: #1a1a1a; position: relative; }
.k { width: 87px; padding-left: 3px; border-right: 1px solid #f0f0f0; height: 15px; line-height: 16px; overflow: hidden; white-space: nowrap; flex: none; }
.v { padding-left: 3px; white-space: nowrap; overflow: hidden; display: flex; align-items: center; flex: 1; height: 15px; }
.b { font-weight: 700; letter-spacing: .25px; }
.sel { background: #f0f0f0; }
.sel .k { border-right-color: #f0f0f0; }
.expander { position: absolute; left: -12px; top: 3px; width: 6px; height: 10px; }
.sw { width: 20px; height: 11px; border: 1px solid #111; background: #fff; margin-right: 7px; display: block; flex: none; position: relative; }
.sw.dark::after { content: ""; position: absolute; inset: 2px 3px; background: #111; }
.fx { width: 20px; height: 11px; border: 1px solid #555; background: #f4f4f4; margin-right: 7px; font: italic 10px/10px "Liberation Serif", serif; color: #777; text-align: center; display: block; flex: none; }
.p-scroll { flex: 1; background: #f0f0f0; display: flex; flex-direction: column; align-items: center; padding-top: 5px; }
.p-thumb { width: 14px; height: 401px; margin-top: 119px; margin-bottom: auto; background: linear-gradient(90deg, #ddd, #c8c8c8); border: 1px solid #ccc; }
.p-scroll .arr2 { margin-bottom: 5px; }
.p-desc { height: 59px; margin: 3px 1px 0; border: 1px solid #b0b0b0; padding: 3px 5px; display: flex; flex-direction: column; gap: 2px; font-size: 10.800px; line-height: 13px; color: #1a1a1a; flex: none; }
.p-tabs { height: 24px; display: flex; margin-top: 3px; }
.pb { display: flex; align-items: center; gap: 6px; padding: 1px 0 0 5px; width: 82px; height: 21px; font-size: 10.4px; color: #333; white-space: nowrap; flex: none; }
.pb.on { color: #2b579a; border-bottom: 2px solid #2b579a; margin-right: 1px; }
.pb-last { gap: 4px; }

.status { height: 28px; background: #2b579a; color: #fff; display: flex; align-items: center; font-size: 11.5px; padding-left: 13px; margin: 0 -1px; flex: none; }
.st { white-space: nowrap; }
.st1 { margin-right: 10px; font-size: 12px; }
.st-car { width: 8px; height: 8px; }
.st-sep { width: 1px; height: 18px; background: #8aa5cc; margin: 0 8px; flex: none; }
.st-car + .st-sep { margin: 0 9px 0 4px; }
.st-play { width: 8px; height: 12px; margin: 0 9px 0 0; }
.st-xy { margin-left: -4px; font-size: 11.2px; }
.st-right { margin-left: auto; display: flex; align-items: center; padding-right: 5px; }
.st-i { width: 16px; height: 16px; margin-right: 6.5px; }
.st-zoom { margin: 0 12px 0 3.5px; font-size: 11.5px; }
.zm-minus { width: 9px; height: 2px; background: #fff; margin-right: 4px; }
.zm-plus { width: 9px; height: 9px; background: linear-gradient(#fff, #fff) center/100% 2px no-repeat, linear-gradient(#fff, #fff) center/2px 100% no-repeat; margin: 0 23px 0 3px; }
.slider { width: 96px; height: 1px; background: #8aa5cc; position: relative; }
.s-tick { position: absolute; left: 49px; top: -4px; width: 1px; height: 9px; background: #8aa5cc; }
.s-thumb { position: absolute; left: 56px; top: -7px; width: 8px; height: 13px; background: #fff; clip-path: polygon(0 0, 100% 0, 100% 65%, 50% 100%, 0 65%); }
.grip { width: 12px; height: 12px; }
```
